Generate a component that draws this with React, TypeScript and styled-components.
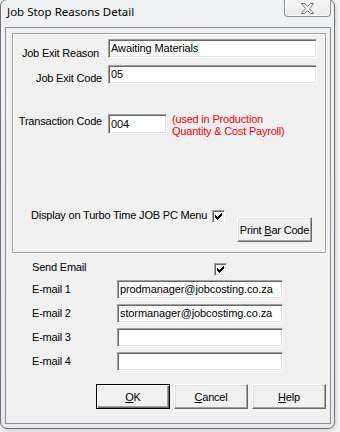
import React from 'react';
import styled, { createGlobalStyle } from 'styled-components';

const GlobalStyle = createGlobalStyle`
  html, body { margin: 0; padding: 0; background: #f7f7f7; }
  body {
    width: 340px; height: 432px; overflow: hidden;
    font-family: "Liberation Sans", Arial, sans-serif;
    font-size: 11px; color: #000;
    letter-spacing: -0.2px;
  }
  * { box-sizing: border-box; }
`;

const Window = styled.div`
  width: 335px;
  height: 430px;
  margin-top: -1px;
  border: 1px solid #6e7277;
  border-radius: 7px;
  background: linear-gradient(180deg, #eff1f3 0%, #e7e9ec 100%);
  padding: 0 3px 4px 4px;
  display: flex;
  flex-direction: column;
  box-shadow: 1px 2px 5px rgba(0, 0, 0, 0.18);
`;

const TitleBar = styled.div`
  height: 27px;
  display: flex;
  align-items: flex-start;
  padding-left: 2px;
`;

const Title = styled.div`
  font-family: "Noto Sans", "Open Sans", sans-serif;
  font-size: 11.5px;
  letter-spacing: 0;
  line-height: 16px;
  padding-top: 4px;
  color: #000;
`;

const CloseButton = styled.div`
  margin-left: auto;
  width: 47px;
  height: 17px;
  border: 1px solid #8e9196;
  border-top: none;
  border-radius: 0 0 4px 4px;
  background: linear-gradient(180deg, #f6f6f6 0%, #ebebeb 100%);
  box-shadow: inset 0 -1px 0 #fafafa, inset 1px 0 0 #fafafa, inset -1px 0 0 #fafafa;
  display: flex;
  align-items: center;
  justify-content: center;
`;

const Client = styled.div`
  flex: 1;
  border: 1px solid #8b8e93;
  background: #f0f0f0;
  display: flex;
  flex-direction: column;
`;

const Panel = styled.div`
  margin: 5px 4px 0 6px;
  height: 220px;
  border: 1px solid #a0a0a0;
  box-shadow: inset 1px 1px 0 #fff, 1px 1px 0 #fff;
  display: flex;
  flex-direction: column;
  padding: 5px 8px 10px 0;
`;

const FieldRow = styled.div<{ $mt?: number }>`
  display: grid;
  grid-template-columns: 89px auto;
  column-gap: 6px;
  align-items: start;
  margin-top: ${(p) => p.$mt ?? 0}px;
`;

const FieldLabel = styled.div<{ $dy?: number; $pr?: number }>`
  text-align: right;
  line-height: 12px;
  white-space: nowrap;
  margin-top: ${(p) => p.$dy ?? 0}px;
  padding-right: ${(p) => p.$pr ?? 0}px;
`;

const TextBox = styled.div<{ $w?: number; $h?: number }>`
  width: ${(p) => (p.$w ? `${p.$w}px` : '100%')};
  height: ${(p) => p.$h ?? 19}px;
  line-height: ${(p) => (p.$h ?? 19) - 2}px;
  letter-spacing: -0.1px;
  background: #fff;
  border: 1px solid;
  border-color: #a0a0a0 #fff #fff #a0a0a0;
  box-shadow: inset 1px 1px 0 #696969, inset -1px -1px 0 #e3e3e3;
  padding: 0 2px;
  white-space: nowrap;
  overflow: hidden;
`;

const CodeCell = styled.div`
  display: flex;
  align-items: flex-start;
`;

const Note = styled.div`
  color: #ff0000;
  line-height: 12px;
  margin: -1px 0 0 5px;
  white-space: nowrap;
`;

const BottomRow = styled.div`
  margin-top: auto;
  display: flex;
  align-items: flex-start;
  padding-left: 18px;
`;

const InlineLabel = styled.div<{ $w: number }>`
  width: ${(p) => p.$w}px;
  line-height: 13px;
  white-space: nowrap;
`;

const CheckBox = styled.div<{ $mt?: number; $ml?: number }>`
  width: 13px;
  height: 13px;
  margin-top: ${(p) => p.$mt ?? 0}px;
  margin-left: ${(p) => p.$ml ?? 0}px;
  background: #fff;
  border: 1px solid;
  border-color: #a0a0a0 #fff #fff #a0a0a0;
  box-shadow: inset 1px 1px 0 #696969, inset -1px -1px 0 #e3e3e3;
  display: flex;
  align-items: center;
  justify-content: center;
`;

const Button = styled.button<{ $w: number; $mt?: number; $ml?: number; $default?: boolean }>`
  width: ${(p) => p.$w}px;
  height: 25px;
  margin-top: ${(p) => p.$mt ?? 0}px;
  margin-left: ${(p) => p.$ml ?? 0}px;
  padding: 0;
  background: #f0f0f0;
  font-family: "Liberation Sans", Arial, sans-serif;
  font-size: 11px;
  letter-spacing: -0.2px;
  color: #000;
  border: 1px solid;
  border-color: ${(p) => (p.$default ? '#000' : '#fff #696969 #696969 #fff')};
  box-shadow: ${(p) =>
    p.$default
      ? 'inset 1px 1px 0 #fff, inset -1px -1px 0 #696969, inset -2px -2px 0 #a0a0a0'
      : 'inset -1px -1px 0 #a0a0a0, inset 1px 1px 0 #e3e3e3'};
  u { text-decoration: underline; text-underline-offset: 1px; }
`;

const EmailGrid = styled.div`
  margin: 8px 0 0 26px;
  display: grid;
  grid-template-columns: 85px 166px;
  grid-template-rows: 14px repeat(4, 19px);
  row-gap: 5px;
  align-items: center;
`;

const EmailLabel = styled.div<{ $top?: boolean }>`
  line-height: 13px;
  white-space: nowrap;
  align-self: ${(p) => (p.$top ? 'start' : 'center')};
`;

const CheckCell = styled.div`
  align-self: start;
  display: flex;
`;

const ButtonRow = styled.div`
  margin-top: 13px;
  display: flex;
  justify-content: flex-end;
  gap: 4px;
  padding-right: 4px;
`;

const CloseGlyph = () => (
  <svg width="13" height="11" viewBox="0 0 13 11">
    <polygon
      points="0.5,0.5 3.5,0.5 6.5,3.5 9.5,0.5 12.5,0.5 8.5,5.5 12.5,10.5 9.5,10.5 6.5,7.5 3.5,10.5 0.5,10.5 4.5,5.5"
      fill="#fdfdfd"
      stroke="#6f7378"
      strokeWidth="1"
      strokeLinejoin="round"
    />
  </svg>
);

const CheckMark = () => (
  <svg width="7" height="7" viewBox="0 0 7 7" shapeRendering="crispEdges">
    <path d="M6 0h1v3h-1v1h-1v1h-1v1h-1v1h-1v-1h-1v-1h-1v-3h1v1h1v1h1v-1h1v-1h1z" fill="#000" />
  </svg>
);

export default function App() {
  return (
    <>
      <GlobalStyle />
      <Window>
        <TitleBar>
          <Title>Job Stop Reasons Detail</Title>
          <CloseButton>
            <CloseGlyph />
          </CloseButton>
        </TitleBar>
        <Client>
          <Panel>
            <FieldRow>
              <FieldLabel $dy={8} $pr={3}>Job Exit Reason</FieldLabel>
              <TextBox>Awaiting Materials</TextBox>
            </FieldRow>
            <FieldRow $mt={6}>
              <FieldLabel $dy={7}>Job Exit Code</FieldLabel>
              <TextBox>05</TextBox>
            </FieldRow>
            <FieldRow $mt={30}>
              <FieldLabel $dy={1}>Transaction Code</FieldLabel>
              <CodeCell>
                <TextBox $w={59} $h={20}>004</TextBox>
                <Note>
                  (used in Production
                  <br />
                  Quantity &amp; Cost Payroll)
                </Note>
              </CodeCell>
            </FieldRow>
            <BottomRow>
              <InlineLabel $w={181}>Display on Turbo Time JOB PC Menu</InlineLabel>
              <CheckBox $mt={1}>
                <CheckMark />
              </CheckBox>
              <Button $w={75} $mt={8} $ml={12}>
                Print <u>B</u>ar Code
              </Button>
            </BottomRow>
          </Panel>
          <EmailGrid>
            <EmailLabel $top>Send Email</EmailLabel>
            <CheckCell>
              <CheckBox $mt={2} $ml={97}>
                <CheckMark />
              </CheckBox>
            </CheckCell>
            <EmailLabel>E-mail 1</EmailLabel>
            <TextBox>prodmanager@jobcosting.co.za</TextBox>
            <EmailLabel>E-mail 2</EmailLabel>
            <TextBox>stormanager@jobcostimg.co.za</TextBox>
            <EmailLabel>E-mail 3</EmailLabel>
            <TextBox />
            <EmailLabel>E-mail 4</EmailLabel>
            <TextBox />
          </EmailGrid>
          <ButtonRow>
            <Button $w={74} $default>
              <u>O</u>K
            </Button>
            <Button $w={74}>
              <u>C</u>ancel
            </Button>
            <Button $w={74}>
              <u>H</u>elp
            </Button>
          </ButtonRow>
        </Client>
      </Window>
    </>
  );
}
